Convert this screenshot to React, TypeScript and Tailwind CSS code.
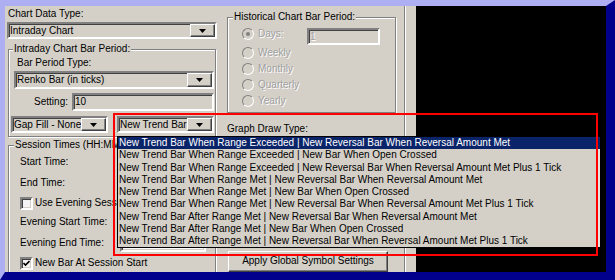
import React from "react";

const items = [
  "New Trend Bar When Range Exceeded | New Reversal Bar When Reversal Amount Met",
  "New Trend Bar When Range Exceeded | New Bar When Open Crossed",
  "New Trend Bar When Range Exceeded | New Reversal Bar When Reversal Amount Met Plus 1 Tick",
  "New Trend Bar When Range Met | New Reversal Bar When Reversal Amount Met",
  "New Trend Bar When Range Met | New Bar When Open Crossed",
  "New Trend Bar When Range Met | New Reversal Bar When Reversal Amount Met Plus 1 Tick",
  "New Trend Bar After Range Met | New Reversal Bar When Reversal Amount Met",
  "New Trend Bar After Range Met | New Bar When Open Crossed",
  "New Trend Bar After Range Met | New Reversal Bar When Reversal Amount Met Plus 1 Tick",
];

// classic 3d borders
const sunken =
  "border-2 border-t-[#808080] border-l-[#808080] border-b-white border-r-white shadow-[inset_1px_1px_0_#404040,inset_-1px_-1px_0_#d4d0c8]";
const raised =
  "border border-t-white border-l-white border-b-[#404040] border-r-[#404040] shadow-[inset_-1px_-1px_0_#808080]";
const disabledText = "text-[#a0a0a0] [text-shadow:1px_1px_0_#ffffff]";

function Select({ text, className = "" }: { text: string; className?: string }) {
  return (
    <div className={`flex bg-[#d4d0c8] ${sunken} ${className}`}>
      <span className="flex-1 overflow-hidden whitespace-nowrap pl-[1px] leading-[13px]">{text}</span>
      <span className={`flex w-[25px] items-center justify-center bg-[#d4d0c8] ${raised}`}>
        <svg width="7" height="4" viewBox="0 0 7 4">
          <path d="M0 0h7L3.5 4z" fill="#000" />
        </svg>
      </span>
    </div>
  );
}

function GroupBox({
  label,
  className = "",
  labelLeft = "left-[4px]",
  disabled = false,
  children,
}: {
  label: string;
  className?: string;
  labelLeft?: string;
  disabled?: boolean;
  children: React.ReactNode;
}) {
  return (
    <div className={`relative border border-[#808080] shadow-[1px_1px_0_#fff,inset_1px_1px_0_#fff] ${className}`}>
      <span className={`absolute -top-[7px] ${labelLeft} bg-[#d4d0c8] px-[1px] leading-[12px] whitespace-nowrap`}>
        {label}
      </span>
      {children}
    </div>
  );
}

function Radio({ label, checked = false }: { label: string; checked?: boolean }) {
  return (
    <div className="flex h-[16px] items-center pl-[14px]">
      <span className="flex h-[12px] w-[12px] items-center justify-center rounded-full border border-t-[#808080] border-l-[#808080] border-b-white border-r-white bg-[#d4d0c8]">
        {checked && <span className="h-[4px] w-[4px] rounded-full bg-[#808080]" />}
      </span>
      <span className={`ml-[4px] leading-[14px] ${disabledText}`}>{label}</span>
    </div>
  );
}

function CheckBox({ label, checked = false }: { label: string; checked?: boolean }) {
  return (
    <div className="flex items-center">
      <span className={`flex h-[13px] w-[13px] items-center justify-center bg-[#f4f4f4] ${sunken}`}>
        {checked && (
          <svg width="7" height="7" viewBox="0 0 7 7">
            <path d="M0.5 3 L2.5 5 L6.5 1" stroke="#000" strokeWidth="1.6" fill="none" />
          </svg>
        )}
      </span>
      <span className="ml-[2px] whitespace-nowrap leading-[14px]">{label}</span>
    </div>
  );
}

function TimeRow({ label, h }: { label: string; h: string }) {
  return (
    <div className={`flex items-center pl-[11px] ${h}`}>
      <span className="leading-[14px]">{label}</span>
      <span className={`ml-auto mr-[9px] h-[18px] w-[86px] bg-white ${sunken}`} />
    </div>
  );
}

export default function App() {
  return (
    <div className="h-[280px] w-[615px] border-t-[6px] border-r-[9px] border-b-[8px] border-l-[5px] border-t-[#aeaef2] border-r-[#00008c] border-b-[#00008c] border-l-[#aeaef2] font-['Liberation_Sans',Arial,sans-serif] text-[10px] text-black">
      <div className="relative flex h-full">
        {/* settings dialog */}
        <div className="flex h-full w-[399px] overflow-hidden bg-[#d4d0c8]">
          <div className="ml-[2px] flex w-[210px] flex-col">
            <span className="mt-[1px] pl-[1px] leading-[14px]">Chart Data Type:</span>
            <Select text="Intraday Chart" className="mt-[1px] h-[18px] w-full" />

            <GroupBox label="Intraday Chart Bar Period:" className="mt-[10px] ml-[1px] w-[208px] pb-[3px]">
              <div className="mt-[6px] pl-[8px] leading-[14px]">Bar Period Type:</div>
              <Select text="Renko Bar (in ticks)" className="mt-[1px] ml-[5px] h-[18px] w-[200px]" />
              <div className="mt-[4px] flex h-[18px] items-center">
                <span className="w-[59px] text-right leading-[14px]">Setting:</span>
                <span className={`ml-[4px] h-[18px] w-[142px] bg-[#d4d0c8] pl-[1px] leading-[14px] ${sunken}`}>10</span>
              </div>
              <div className="mt-[5px] flex">
                <Select text="Gap Fill - None" className="ml-[2px] h-[17px] w-[97px]" />
                <Select text="New Trend Bar When Range Exceeded" className="ml-[9px] h-[17px] w-[97px]" />
              </div>
            </GroupBox>

            <GroupBox label="Session Times (HH:MM:SS)" labelLeft="left-[5px]" className="mt-[8px] ml-[1px] w-[208px] pb-[20px]">
              <div className="mt-[5px]" />
              <TimeRow label="Start Time:" h="h-[21px]" />
              <TimeRow label="End Time:" h="h-[21px]" />
              <div className="flex h-[20px] items-center pl-[11px]">
                <CheckBox label="Use Evening Session" />
              </div>
              <TimeRow label="Evening Start Time:" h="h-[17px]" />
              <TimeRow label="Evening End Time:" h="h-[25px]" />
              <div className="flex h-[16px] items-center pl-[11px]">
                <CheckBox label="New Bar At Session Start" checked />
              </div>
            </GroupBox>
          </div>

          <div className="ml-[10px] flex w-[169px] flex-col">
            <GroupBox label="Historical Chart Bar Period:" labelLeft="left-[5px]" className="mt-[11px] pb-[3px]">
              <div className="mt-[8px]" />
              <div className="flex">
                <div className="flex-1">
                  <Radio label="Days:" checked />
                </div>
                <span className={`mt-[2px] mr-[15px] h-[17px] w-[73px] bg-[#d4d0c8] pl-[1px] leading-[13px] ${sunken} ${disabledText}`}>
                  1
                </span>
              </div>
              <Radio label="Weekly" />
              <Radio label="Monthly" />
              <Radio label="Quarterly" />
              <Radio label="Yearly" />
            </GroupBox>
            <span className="mt-[9px] leading-[14px]">Graph Draw Type:</span>
            <Select text="" className="h-[18px] w-full" />
            <button
              className={`mt-[98px] ml-[1px] h-[23px] w-[160px] bg-[#d4d0c8] text-center leading-[14px] ${raised}`}
            >
              Apply Global Symbol Settings
            </button>
          </div>
        </div>

        {/* splitter */}
        <div className="h-full w-[12px] border-l border-[#808080] bg-[#d4d0c8] shadow-[inset_1px_0_0_#fff]" />

        {/* chart area */}
        <div className="h-full flex-1 bg-black" />

        {/* open drop-down list */}
        <div className="absolute top-[130px] left-[112px] w-[484px] border border-black bg-[#d4d0c8] shadow-[inset_-3px_0_0_#e4e2dc]">
          {items.map((t, i) => (
            <div
              key={t}
              className={`h-[12.25px] overflow-hidden whitespace-nowrap pl-[1px] leading-[12.25px] ${
                i === 0 ? "bg-[#0a246a] text-white" : ""
              }`}
            >
              {t}
            </div>
          ))}
        </div>

        {/* annotation box */}
        <div className="absolute top-[107px] left-[108px] h-[143px] w-[485px] border-2 border-[#ff0000]" />
      </div>
    </div>
  );
}
